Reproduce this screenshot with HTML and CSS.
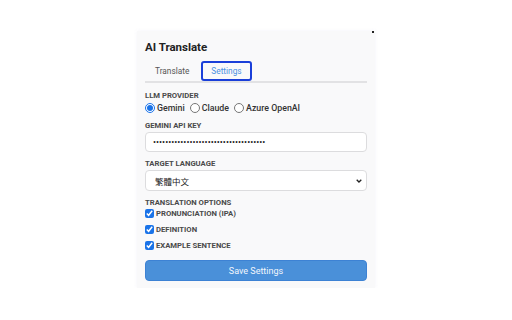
FILE: index.html
```html
<!DOCTYPE html>
<html lang="en">
<head>
    <meta charset="UTF-8">
    <meta name="viewport" content="width=device-width, initial-scale=1.0">
    <title>AI Translate</title>
    <link rel="stylesheet" href="styles.css">
</head>
<body>
    <div class="popup">
        <span class="dot"></span>
        <h1>AI Translate</h1>
        <div class="tabs">
            <button class="tab">Translate</button>
            <button class="tab active">Settings</button>
        </div>
        <div class="section provider">
            <div class="label">LLM Provider</div>
            <div class="radios">
                <label><input type="radio" name="provider" checked> Gemini</label>
                <label><input type="radio" name="provider"> Claude</label>
                <label><input type="radio" name="provider"> Azure OpenAI</label>
            </div>
        </div>
        <div class="section key">
            <div class="label">Gemini API Key</div>
            <input type="password" class="field" value="mmmmmmmmmmmmmmmmmmmmmmmmmmmmmmmmmmmmm">
        </div>
        <div class="section lang">
            <div class="label">Target Language</div>
            <div class="select-wrap">
                <select class="field select">
                    <option>繁體中文</option>
                </select>
                <svg class="chevron" width="6" height="4" viewBox="0 0 6 4">
                    <path d="M0.7 0.7 L3 3 L5.3 0.7" fill="none" stroke="#222" stroke-width="1.3"/>
                </svg>
            </div>
        </div>
        <div class="section options">
            <div class="label">Translation Options</div>
            <label class="check"><input type="checkbox" checked> Pronunciation (IPA)</label>
            <label class="check"><input type="checkbox" checked> Definition</label>
            <label class="check"><input type="checkbox" checked> Example Sentence</label>
        </div>
        <button class="save">Save Settings</button>
    </div>
</body>
</html>
```

FILE: styles.css
```css
body {
    margin: 0;
    background: #fff;
    font-family: Roboto, "Liberation Sans", Arial, sans-serif;
}
.popup {
    position: relative;
    width: 222px;
    margin: 31px auto 0;
    padding: 8px 8px 7px;
    background: #f9f9fa;
    box-shadow: 0 0 4px rgba(120, 120, 190, 0.08);
    accent-color: #1a73e8;
}
.dot {
    position: absolute;
    top: 0;
    right: 1px;
    width: 2px;
    height: 2px;
    background: #222;
}
h1 {
    margin: 0;
    font-size: 11.5px;
    line-height: 17px;
    font-weight: 700;
    color: #222;
}
.tabs {
    display: flex;
    gap: 2px;
    margin-top: 5px;
    border-bottom: 2px solid #e2e2e4;
}
.tab {
    font-family: inherit;
    font-size: 8.3px;
    height: 20px;
    padding: 0 8px;
    border: 2px solid transparent;
    border-radius: 3px;
    background: none;
    color: #555;
}
.tab.active {
    color: #4a90e2;
    border-color: #1a3fd9;
}
.label {
    font-size: 7.7px;
    font-weight: 700;
    text-transform: uppercase;
    color: #4a4a4a;
    line-height: 10px;
}
.provider {
    margin-top: 8px;
}
.key {
    margin-top: 7px;
}
.key .label {
    margin-bottom: 1px;
}
.lang {
    margin-top: 7px;
}
.lang .label {
    margin-bottom: 1px;
}
.options {
    margin-top: 7px;
}
.options .label {
    margin-bottom: -3px;
}
.radios {
    display: flex;
    gap: 5px;
    height: 12px;
    margin-top: 1px;
    font-size: 8.8px;
    font-weight: 500;
    color: #333;
}
.radios label {
    display: flex;
    align-items: center;
    gap: 2px;
}
.radios input {
    margin: 0;
    width: 10px;
    height: 10px;
}
.field {
    display: block;
    box-sizing: border-box;
    width: 100%;
    height: 20px;
    padding: 0 7px;
    border: 1px solid #dcdcde;
    border-radius: 4px;
    background: #fff;
    font-family: inherit;
    font-size: 9px;
    color: #222;
}
.select-wrap {
    position: relative;
}
.select {
    height: 21px;
    padding: 0 9px;
    appearance: none;
    font-family: "Noto Sans CJK TC", sans-serif;
    font-size: 8.5px;
}
.chevron {
    position: absolute;
    right: 5px;
    top: 9px;
}
.check {
    display: flex;
    align-items: center;
    gap: 2px;
    height: 16px;
    font-size: 7.7px;
    font-weight: 700;
    text-transform: uppercase;
    color: #4a4a4a;
}
.check input {
    margin: 0;
    width: 9px;
    height: 9px;
}
.save {
    display: block;
    width: 100%;
    height: 21px;
    margin-top: 7px;
    border: 1px solid #3d82d4;
    border-radius: 4px;
    background: #4a90d9;
    color: #f2f6fc;
    font-family: inherit;
    font-size: 9px;
}
```
